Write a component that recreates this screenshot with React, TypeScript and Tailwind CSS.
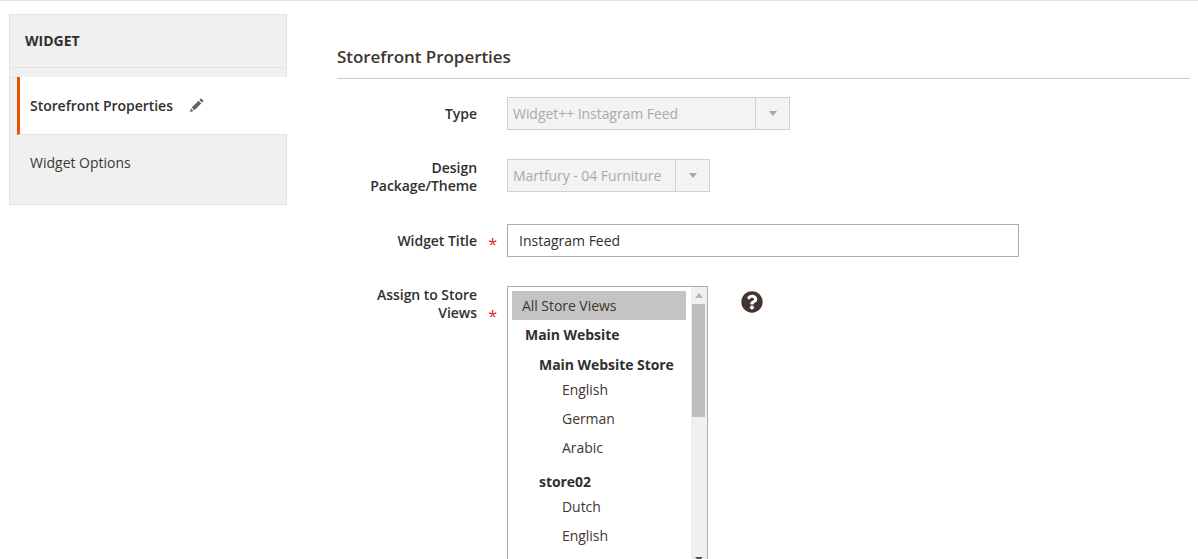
import { FaQuestionCircle } from "react-icons/fa";

const font = "font-['Open_Sans',sans-serif]";

function Caret() {
  return (
    <svg width="8" height="5" viewBox="0 0 8 5">
      <path d="M0 0h8L4 5z" fill="#a8a8a8" />
    </svg>
  );
}

function DisabledSelect({ value, width, textWidth }: { value: string; width: string; textWidth: string }) {
  return (
    <div className={`${width} flex h-[33px] border border-[#d0d0d0] bg-[#f3f3f3] text-[14px] tracking-[-0.05px] text-[#aaa]`}>
      <div className={`${textWidth} flex items-center whitespace-nowrap pl-[5px]`}>{value}</div>
      <div className="flex flex-1 items-center justify-center border-l border-[#d0d0d0]">
        <Caret />
      </div>
    </div>
  );
}

function Row({ label, required, children, className = "" }: { label: React.ReactNode; required?: boolean; children: React.ReactNode; className?: string }) {
  return (
    <div className={`flex ${className}`}>
      <div className="w-[140px]">
        <div className="relative text-right text-[14px] font-semibold leading-[18px] tracking-[-0.05px] text-[#303030]">
          {label}
          {required && <span className="absolute right-[-20px] bottom-[-3px] text-[16px] leading-[18px] font-normal text-[#e22626]">*</span>}
        </div>
      </div>
      <div className="ml-[30px]">{children}</div>
    </div>
  );
}

const itemH = "flex items-center whitespace-nowrap";

export default function App() {
  return (
    <div className={`${font} h-[559px] w-[1198px] overflow-hidden border-t border-[#e3e3e3] bg-white`}>
      <div className="flex items-start pt-[13px] pl-[9px]">
        <aside className="w-[278px] border border-[#e3e3e3] bg-[#f0f0f0]">
          <div className="flex h-[53px] items-center border-b border-[#e3e3e3] pb-[2px] pl-[15px] text-[14px] font-bold text-[#303030]">
            WIDGET
          </div>
          <div className="h-[10px] border-b border-[#e3e3e3]" />
          <div className="relative mt-[-1px] ml-[7px] mr-[-1px] flex h-[58px] items-center border-b border-[#e3e3e3] border-l-[3px] border-l-[#eb5202] bg-white pl-[10px] text-[14px] font-semibold tracking-[-0.05px] text-[#303030]">
            Storefront Properties
            <svg width="15" height="15" viewBox="0 0 15 15" className="ml-[16px]">
              <path d="M1 14l.9-3.6 2.7 2.7zM2.8 9.6 9.6 2.8l2.6 2.6-6.8 6.8zM10.4 2l1.2-1.2c.3-.3.7-.3 1 0l1.6 1.6c.3.3.3.7 0 1L13 4.6z" fill="#676056" />
            </svg>
          </div>
          <div className="flex h-[69px] items-start pt-[18px] pl-[20px] text-[14px] leading-[19px] text-[#41362f]">
            Widget Options
          </div>
        </aside>

        <main className="ml-[50px] w-[853px]">
          <h2 className="mt-[31px] border-b border-[#d1c9bd] pb-[10px] text-[17px] leading-[23px] font-semibold tracking-[-0.05px] text-[#41362f]">
            Storefront Properties
          </h2>
          <Row label={<span className="block pt-[8px]">Type</span>} className="mt-[18px]">
            <DisabledSelect value="Widget++ Instagram Feed" width="w-[283px]" textWidth="w-[247px]" />
          </Row>
          <Row label="Design Package/Theme" className="mt-[29px]">
            <DisabledSelect value="Martfury - 04 Furniture" width="w-[203px]" textWidth="w-[167px]" />
          </Row>
          <Row label={<span className="block pt-[8px]">Widget Title</span>} required className="mt-[29px]">
            <input
              readOnly
              value="Instagram Feed"
              className="block h-[33px] w-[512px] border border-[#adadad] bg-white px-[11px] text-[14px] text-[#303030] outline-none"
            />
          </Row>
          <Row label="Assign to Store Views" required className="mt-[29px]">
            <div className="flex items-start">
              <div className="flex h-[320px] w-[201px] border border-[#adadad] text-[14px] tracking-[-0.05px] text-[#41362f]">
                <div className="w-[183px] pt-[4px] pl-[4px]">
                  <div className={`${itemH} h-[29px] w-[174px] bg-[#c4c4c4] pl-[10px]`}>All Store Views</div>
                  <div className={`${itemH} h-[30px] pb-[1px] pl-[13px] font-bold text-[#303030]`}>Main Website</div>
                  <div className={`${itemH} h-[29px] pl-[27px] font-bold text-[#303030]`}>Main Website Store</div>
                  <div className={`${itemH} h-[21px] pl-[50px]`}>English</div>
                  <div className={`${itemH} mt-[4px] h-[29px] pl-[50px]`}>German</div>
                  <div className={`${itemH} h-[29px] pl-[50px]`}>Arabic</div>
                  <div className={`${itemH} mt-[5px] h-[29px] pl-[27px] font-bold text-[#303030]`}>store02</div>
                  <div className={`${itemH} h-[21px] pl-[50px]`}>Dutch</div>
                  <div className={`${itemH} mt-[4px] h-[29px] pl-[50px]`}>English</div>
                </div>
                <div className="flex h-[272px] w-[16px] flex-col items-center bg-[#f0f0f0]">
                  <svg width="8" height="5" viewBox="0 0 8 5" className="mt-[6px]"><path d="M4 0l4 5H0z" fill="#b5b5b5" /></svg>
                  <div className="mt-[6px] ml-[-2px] h-[113px] w-[13px] bg-[#bebebe]" />
                  <div className="flex-1" />
                  <svg width="8" height="4" viewBox="0 0 8 4" className="mb-[-2px]"><path d="M0 0h8L4 4z" fill="#505050" /></svg>
                </div>
              </div>
              <FaQuestionCircle size={22} color="#41362f" className="ml-[33px] mt-[5px]" />
            </div>
          </Row>
        </main>
      </div>
    </div>
  );
}
